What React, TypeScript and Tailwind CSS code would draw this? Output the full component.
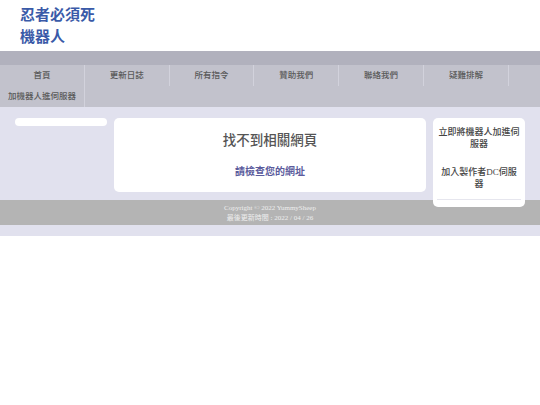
import React from "react";

const NAV_ITEMS = ["首頁", "更新日誌", "所有指令", "贊助我們", "聯絡我們", "疑難排解", "加機器人進伺服器"];

const cjk = { fontFamily: '"Liberation Sans", "Noto Sans CJK TC", sans-serif' };
const serif = { fontFamily: '"Liberation Serif", "Noto Sans CJK TC", serif' };

export default function App() {
  return (
    <div className="min-h-[405px] w-[540px] bg-white" style={cjk}>
      {/* header */}
      <header className="h-[51px] px-[20px] pt-[4px]">
        <h1 className="text-[15px] font-bold leading-[22px] text-[#3a5aa8]">
          忍者必須死
          <br />
          機器人
        </h1>
      </header>

      <div className="h-[14px] bg-[#b1b1bd]" />

      {/* nav */}
      <nav className="flex flex-wrap bg-[#c2c2cc]">
        {NAV_ITEMS.map((item) => (
          <a
            key={item}
            className="flex h-[21px] w-[84.8px] items-center justify-center border-r border-[#d2d2dc] text-[8.5px] font-medium text-[#5a5a5a]"
          >
            {item}
          </a>
        ))}
      </nav>

      {/* main */}
      <main className="flex h-[93px] items-start gap-[7px] bg-[#e1e1ee] px-[15px] pt-[11px]">
        <div className="h-[8px] w-[92px] shrink-0 rounded-[4px] bg-white" />

        <section className="flex h-[74px] w-[312px] shrink-0 flex-col items-center rounded-[5px] bg-white pt-[13px]">
          <h2 className="text-[13.5px] leading-[20px] font-medium text-[#555555]">找不到相關網頁</h2>
          <p className="mt-[14px] text-[10px] leading-[14px] font-semibold text-[#5b5b9c]">請檢查您的網址</p>
        </section>

        <aside
          className="relative z-10 flex h-[89px] w-[92px] shrink-0 flex-col items-center rounded-[5px] bg-white px-[5px] pt-[8px]"
          style={serif}
        >
          <p className="text-center text-[9px] leading-[12px] font-medium text-[#444444]">立即將機器人加進伺服器</p>
          <p className="mt-[16px] text-center text-[9px] leading-[12px] font-medium text-[#444444]">加入製作者DC伺服器</p>
          <div className="mt-auto mb-[7px] h-px w-[84px] bg-[#e6e6ee]" />
        </aside>
      </main>

      {/* footer */}
      <footer
        className="flex h-[25px] flex-col items-center justify-center bg-[#b4b4b4] text-[7px] leading-[10px] text-[#eeeeee]"
        style={serif}
      >
        <p>Copyright © 2022 YummySheep</p>
        <p>最後更新時間 : 2022 / 04 / 26</p>
      </footer>

      <div className="h-[11px] bg-[#e1e1ee]" />
    </div>
  );
}
